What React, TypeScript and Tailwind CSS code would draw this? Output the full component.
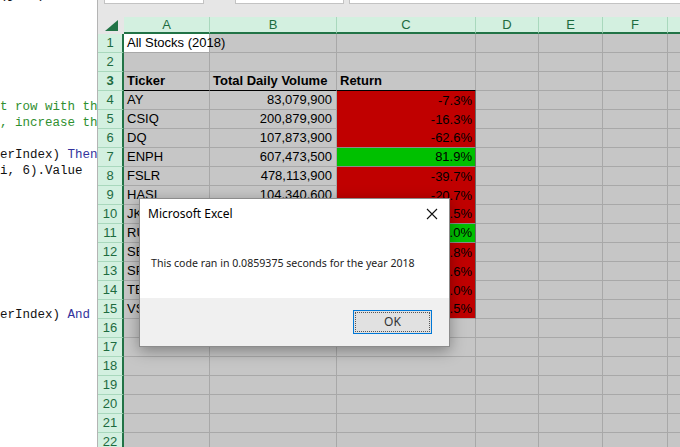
import React from "react";

type Row = {
  ticker: string;
  volume: string;
  ret: string;
  up: boolean;
};

const stockRows: Row[] = [
  { ticker: "AY", volume: "83,079,900", ret: "-7.3%", up: false },
  { ticker: "CSIQ", volume: "200,879,900", ret: "-16.3%", up: false },
  { ticker: "DQ", volume: "107,873,900", ret: "-62.6%", up: false },
  { ticker: "ENPH", volume: "607,473,500", ret: "81.9%", up: true },
  { ticker: "FSLR", volume: "478,113,900", ret: "-39.7%", up: false },
  { ticker: "HASI", volume: "104,340,600", ret: "-20.7%", up: false },
  { ticker: "JKS", volume: "141,758,000", ret: "-60.5%", up: false },
  { ticker: "RUN", volume: "502,757,100", ret: "84.0%", up: true },
  { ticker: "SEDG", volume: "136,070,900", ret: "-7.8%", up: false },
  { ticker: "SPWR", volume: "467,837,300", ret: "-44.6%", up: false },
  { ticker: "TERP", volume: "168,838,500", ret: "-5.0%", up: false },
  { ticker: "VSLR", volume: "86,891,200", ret: "-3.5%", up: false }
];

// visible tail of each VBA line, one entry per 16px line
const codeLines: { text: string; kw?: string; comment?: boolean }[] = [
  { text: "(j, 1).Value = ti" },
  { text: "" },
  { text: "" },
  { text: "" },
  { text: "" },
  { text: "" },
  { text: "" },
  { text: "t row with th", comment: true },
  { text: ", increase th", comment: true },
  { text: "" },
  { text: "erIndex) ", kw: "Then" },
  { text: "i, 6).Value" },
  { text: "" },
  { text: "" },
  { text: "" },
  { text: "" },
  { text: "" },
  { text: "" },
  { text: "" },
  { text: "" },
  { text: "erIndex) ", kw: "And" }
];

const cellFont = { fontFamily: '"Liberation Sans", Arial, sans-serif' };

function RowHeader({ n }: { n: number }) {
  return (
    <div className="flex h-[19px] w-[26px] shrink-0 items-center justify-center border-b border-r-2 border-b-[#a9d8bd] border-r-[#217346] bg-[#d3f0e0] text-[13px] text-[#1d6b3f]">
      {n}
    </div>
  );
}

function GrayCells({ from }: { from: number }) {
  const widths = ["w-[86px]", "w-[127px]", "w-[139px]", "w-[63px]", "w-[64px]", "w-[65px]", "w-[80px]"];
  return (
    <>
      {widths.slice(from).map((w, i) => (
        <div key={i} className={`h-[19px] shrink-0 border-b border-r border-[#a8a8a8] ${w}`} />
      ))}
    </>
  );
}

export default function App() {
  return (
    <div className="relative h-[447px] w-[680px] overflow-hidden bg-white" style={cellFont}>
      <div className="flex h-full">
        {/* code editor behind the workbook */}
        <div
          className="w-[97px] shrink-0 overflow-hidden bg-white text-[12.5px] leading-4 text-[#111]"
          style={{ fontFamily: '"Liberation Mono", "Courier New", monospace' }}
        >
          <div className="mt-[-13px]">
            {codeLines.map((line, i) => (
              <div key={i} className="h-4 whitespace-pre">
                {line.comment ? (
                  <span className="text-[#2f8f2f]">{line.text}</span>
                ) : (
                  <>
                    {line.text}
                    {line.kw ? <span className="text-[#32329c]">{line.kw}</span> : null}
                  </>
                )}
              </div>
            ))}
          </div>
        </div>

        <div className="flex min-w-0 flex-1 flex-col border-l border-[#b4b4b4] bg-[#c6c6c6]">
          {/* formula bar strip */}
          <div className="flex h-[17px] shrink-0 items-start bg-[#e6e6e6]">
            <div className="ml-[6px] h-[4px] w-[100px] border-x border-b border-[#c3c3c3] bg-white" />
            <div className="ml-[31px] h-[4px] w-[109px] border-x border-b border-[#c3c3c3] bg-white" />
            <div className="ml-[5px] h-[4px] flex-1 border-b border-l border-[#c3c3c3] bg-white" />
          </div>

          {/* column headers */}
          <div className="flex h-[17px] shrink-0 text-[13px] text-[#1d6b3f]">
            <div className="relative w-[26px] shrink-0 bg-[#e6e6e6]">
              <svg className="absolute left-[7px] top-[3px]" width="13" height="11" viewBox="0 0 13 11">
                <polygon points="13,0 13,11 0,11" fill="#217346" />
              </svg>
            </div>
            {[
              ["A", "w-[86px]"],
              ["B", "w-[127px]"],
              ["C", "w-[139px]"],
              ["D", "w-[63px]"],
              ["E", "w-[64px]"],
              ["F", "w-[65px]"],
              ["", "w-[80px]"]
            ].map(([label, w]) => (
              <div
                key={w}
                className={`flex shrink-0 items-center justify-center border-b-2 border-r border-b-[#217346] border-r-[#a9d8bd] bg-[#d3f0e0] ${w}`}
              >
                {label}
              </div>
            ))}
          </div>

          {/* row 1 */}
          <div className="flex text-[13px] text-black">
            <RowHeader n={1} />
            <div className="flex h-[19px] w-[86px] shrink-0 items-center whitespace-nowrap border-b border-r border-[#a8a8a8] bg-white pl-[3px]">
              All Stocks (2018)
            </div>
            <GrayCells from={1} />
          </div>

          {/* row 2 */}
          <div className="flex">
            <RowHeader n={2} />
            <GrayCells from={0} />
          </div>

          {/* row 3 headings */}
          <div className="flex text-[13px] font-bold text-black">
            <RowHeader n={3} />
            <div className="flex h-[19px] w-[86px] shrink-0 items-center border-b border-r border-b-black border-r-[#a8a8a8] pl-[3px]">
              Ticker
            </div>
            <div className="flex h-[19px] w-[127px] shrink-0 items-center whitespace-nowrap border-b border-r border-b-black border-r-[#a8a8a8] pl-[3px]">
              Total Daily Volume
            </div>
            <div className="flex h-[19px] w-[139px] shrink-0 items-center border-b border-r border-b-black border-r-[#a8a8a8] pl-[3px]">
              Return
            </div>
            <GrayCells from={3} />
          </div>

          {stockRows.map((row, i) => (
            <div key={row.ticker} className="flex text-[13px] text-black">
              <RowHeader n={i + 4} />
              <div className="flex h-[19px] w-[86px] shrink-0 items-center border-b border-r border-[#a8a8a8] pl-[3px]">
                {row.ticker}
              </div>
              <div className="flex h-[19px] w-[127px] shrink-0 items-center justify-end border-b border-r border-[#a8a8a8] pr-[4px]">
                {row.volume}
              </div>
              <div
                className={`flex h-[19px] w-[139px] shrink-0 items-center justify-end border-r border-r-[#6b6b6b] pr-[3px] ${
                  row.up ? "bg-[#00c000]" : "bg-[#c00000]"
                } ${i === stockRows.length - 1 ? "border-b border-b-[#a8a8a8]" : ""} ${
                  row.up || stockRows[i + 1]?.up ? "border-b border-b-[#8a8a8a]" : ""
                }`}
              >
                {row.ret}
              </div>
              <GrayCells from={3} />
            </div>
          ))}

          {[16, 17, 18, 19, 20, 21, 22].map((n) => (
            <div key={n} className="flex">
              <RowHeader n={n} />
              <GrayCells from={0} />
            </div>
          ))}
        </div>
      </div>

      {/* message box */}
      <div
        className="absolute left-[139px] top-[198px] flex h-[149px] w-[311px] flex-col border border-[#8c8c8c] shadow-[0_4px_14px_rgba(0,0,0,0.35)]"
        style={{ fontFamily: '"Noto Sans", "Open Sans", sans-serif' }}
      >
        <div className="flex h-[99px] flex-col bg-white">
          <div className="flex h-[30px] items-center justify-between pl-[8px] pr-[10px] text-[12px] text-black">
            <span>Microsoft Excel</span>
            <svg width="12" height="12" viewBox="0 0 12 12" className="mr-[1px]">
              <path d="M1 1 L11 11 M11 1 L1 11" stroke="#111" strokeWidth="1.1" />
            </svg>
          </div>
          <div className="mt-[27px] pl-[11px] text-[10.6px] text-[#222]">
            This code ran in 0.0859375 seconds for the year 2018
          </div>
        </div>
        <div className="flex flex-1 items-start justify-end bg-[#f0f0f0] pr-[17px] pt-[12px]">
          <button
            type="button"
            className="flex h-[24px] w-[79px] items-center justify-center border border-[#0078d7] bg-[#e1e1e1] p-[1px] text-[12px] text-[#333]"
          >
            <span className="flex h-full w-full items-center justify-center border border-dotted border-[#555]">
              OK
            </span>
          </button>
        </div>
      </div>
    </div>
  );
}
